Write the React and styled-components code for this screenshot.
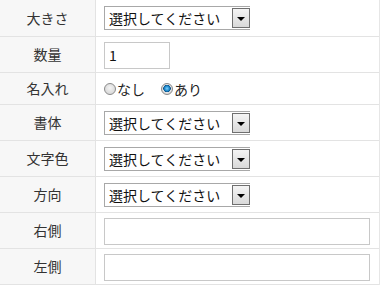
import React from "react";
import styled, { createGlobalStyle } from "styled-components";

const Global = createGlobalStyle`
  html, body { margin: 0; padding: 0; background: #fff; }
  body { font-family: "Noto Sans CJK JP", "Noto Sans", sans-serif; color: #333; }
`;

const Table = styled.div`
  width: 380px;
  border-right: 1px solid #e6e6e6;
  box-sizing: border-box;
`;

const Row = styled.div`
  display: grid;
  grid-template-columns: 96px 1fr;
  height: ${(p) => p.$h || 36}px;
  border-bottom: 1px solid #e3e3e3;
  box-sizing: border-box;
  &:first-child { height: 37px; }
`;

const Label = styled.div`
  background: #f7f7f7;
  border-right: 1px solid #e3e3e3;
  display: flex;
  align-items: center;
  justify-content: center;
  font-size: 14px;
  color: #333;
  padding-bottom: 1px;
`;

const Value = styled.div`
  display: flex;
  align-items: center;
  padding-left: 8px;
  padding-right: 9px;
  font-size: 14px;
`;

const SelectWrap = styled.div`
  display: inline-flex;
  align-items: stretch;
  width: 146px;
  height: 24px;
  box-sizing: border-box;
  border: 1px solid #a8a8a8;
  border-right: none;
  background: #fff;
`;

const SelectText = styled.div`
  flex: 1;
  display: flex;
  align-items: center;
  padding-left: 4px;
  font-size: 14px;
  color: #111;
  white-space: nowrap;
  overflow: hidden;
`;

const ArrowBox = styled.div`
  width: 18px;
  box-sizing: border-box;
  margin: 1px 0;
  border: 1px solid #6f6f6f;
  background: linear-gradient(#f4f4f4, #d9d9d9);
  display: flex;
  align-items: center;
  justify-content: center;
  &::after {
    content: "";
    display: block;
    margin-top: 2px;
    border-top: 4px solid #000;
    border-left: 4px solid transparent;
    border-right: 4px solid transparent;
  }
`;

const Input = styled.input`
  box-sizing: border-box;
  width: ${(p) => p.$w || 266}px;
  height: 27px;
  border: 1px solid #c8c8c8;
  padding: 0 4px;
  font-family: "Noto Sans CJK JP", "Noto Sans", sans-serif;
  font-size: 14px;
  color: #111;
  outline: none;
  margin-top: 1px;
`;

const RadioGroup = styled.label`
  display: inline-flex;
  align-items: center;
  margin-right: 16px;
  font-size: 14px;
  color: #222;
`;

const Radio = styled.span`
  display: inline-block;
  width: 12px;
  height: 12px;
  box-sizing: border-box;
  border-radius: 50%;
  border: 1px solid #8a8a8a;
  background: ${(p) =>
    p.$checked
      ? "radial-gradient(circle at 50% 45%, #7fd0ff 0, #1a86c8 2.5px, #0b4f86 3.5px, #e6e6e6 4px, #d0d0d0 6px)"
      : "radial-gradient(circle at 50% 40%, #f4f4f4 0, #dcdcdc 5px)"};
  margin-right: 1px;
`;

function Select() {
  return (
    <SelectWrap>
      <SelectText>選択してください</SelectText>
      <ArrowBox />
    </SelectWrap>
  );
}

export default function App() {
  return (
    <>
      <Global />
      <Table>
        <Row>
          <Label>大きさ</Label>
          <Value><Select /></Value>
        </Row>
        <Row>
          <Label>数量</Label>
          <Value><Input $w={66} defaultValue="1" /></Value>
        </Row>
        <Row $h={32}>
          <Label>名入れ</Label>
          <Value>
            <RadioGroup><Radio />なし</RadioGroup>
            <RadioGroup><Radio $checked />あり</RadioGroup>
          </Value>
        </Row>
        <Row>
          <Label>書体</Label>
          <Value><Select /></Value>
        </Row>
        <Row>
          <Label>文字色</Label>
          <Value><Select /></Value>
        </Row>
        <Row>
          <Label>方向</Label>
          <Value><Select /></Value>
        </Row>
        <Row>
          <Label>右側</Label>
          <Value><Input /></Value>
        </Row>
        <Row>
          <Label>左側</Label>
          <Value><Input /></Value>
        </Row>
      </Table>
    </>
  );
}
